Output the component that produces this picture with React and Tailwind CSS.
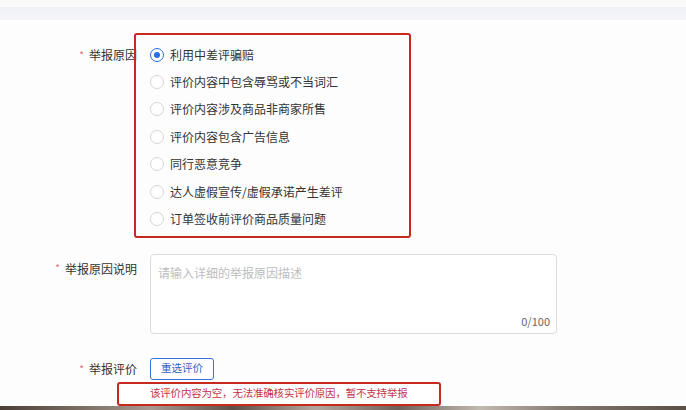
import { useState } from 'react'

const reasons = [
  '利用中差评骗赔',
  '评价内容中包含辱骂或不当词汇',
  '评价内容涉及商品非商家所售',
  '评价内容包含广告信息',
  '同行恶意竞争',
  '达人虚假宣传/虚假承诺产生差评',
  '订单签收前评价商品质量问题',
]

function Label({ children, className = '' }) {
  return (
    <div className={`w-[137px] shrink-0 flex justify-end items-center text-[12px] text-[#333] ${className}`}>
      <span className="text-[#e8667a] text-[10px] mr-[5px] leading-none">*</span>
      <span className="leading-none whitespace-nowrap">{children}</span>
    </div>
  )
}

function Radio({ checked }) {
  if (checked) {
    return (
      <span className="w-[14px] h-[14px] rounded-full border border-[#2b6de5] flex items-center justify-center shrink-0">
        <span className="w-[6px] h-[6px] rounded-full bg-[#2b6de5]" />
      </span>
    )
  }
  return <span className="w-[14px] h-[14px] rounded-full border border-[#d6d6d6] bg-white shrink-0" />
}

export default function App() {
  const [selected, setSelected] = useState(0)
  const [text, setText] = useState('')

  return (
    <div className="relative w-[686px] h-[410px] overflow-hidden bg-[#fdfdfd] font-['Noto_Sans_CJK_SC',sans-serif]">
      {/* top band */}
      <div className="h-[7px] bg-[#fafafa]" />
      <div className="h-[13px] bg-gradient-to-b from-[#eef1f7] to-[#f3f5f9]" />

      {/* reason row */}
      <div className="flex mt-[21px]">
        <Label className="h-[27.4px]">举报原因</Label>
        <div className="ml-[13px] flex flex-col">
          {reasons.map((r, i) => (
            <button
              key={r}
              onClick={() => setSelected(i)}
              className="h-[27.4px] flex items-center gap-[6px] text-left"
            >
              <Radio checked={selected === i} />
              <span className="text-[12px] text-[#333] leading-none whitespace-nowrap">{r}</span>
            </button>
          ))}
        </div>
      </div>

      {/* annotation around the reasons */}
      <div className="absolute left-[134px] top-[33px] w-[277px] h-[205px] border-2 border-[#c8281e] rounded-[3px] pointer-events-none" />

      {/* description row */}
      <div className="flex mt-[21px]">
        <Label className="h-[30px] items-start pt-[9px]">举报原因说明</Label>
        <div className="ml-[13px] relative w-[407px] h-[80px] border border-[#dcdcdc] rounded-[4px] bg-white">
          <textarea
            value={text}
            onChange={(e) => setText(e.target.value.slice(0, 100))}
            placeholder="请输入详细的举报原因描述"
            className="w-full h-full resize-none outline-none bg-transparent px-[7px] pt-[9px] text-[12px] leading-[18px] text-[#333] placeholder:text-[#bdbdbd]"
          />
          <span className="absolute right-[6px] bottom-[6px] text-[11px] text-[#666] leading-none">
            {text.length}/100
          </span>
        </div>
      </div>

      {/* review row */}
      <div className="flex mt-[24px]">
        <Label className="h-[22px]">举报评价</Label>
        <div className="ml-[13px] flex flex-col">
          <button className="w-[64px] h-[22px] border border-[#3a6fd8] rounded-[3px] bg-white text-[10.5px] text-[#2f5fc4] leading-none">
            重选评价
          </button>
          <div className="-ml-[33px] mt-[2px] w-[324px] h-[24px] border-2 border-[#c8281e] rounded-[3px] bg-white flex items-center pl-[31px]">
            <span className="text-[10.5px] text-[#c23646] leading-none whitespace-nowrap tracking-[-0.2px]">
              该评价内容为空，无法准确核实评价原因，暂不支持举报
            </span>
          </div>
        </div>
      </div>

      {/* bottom photo strip */}
      <div className="absolute left-0 right-0 bottom-0 h-[4px] bg-[linear-gradient(90deg,#4a3f38_0%,#7d6e63_12%,#a69a90_22%,#5c4f46_34%,#b3a89f_46%,#6e6258_58%,#c2b9b1_70%,#857a72_82%,#5a5048_100%)]" />
    </div>
  )
}
